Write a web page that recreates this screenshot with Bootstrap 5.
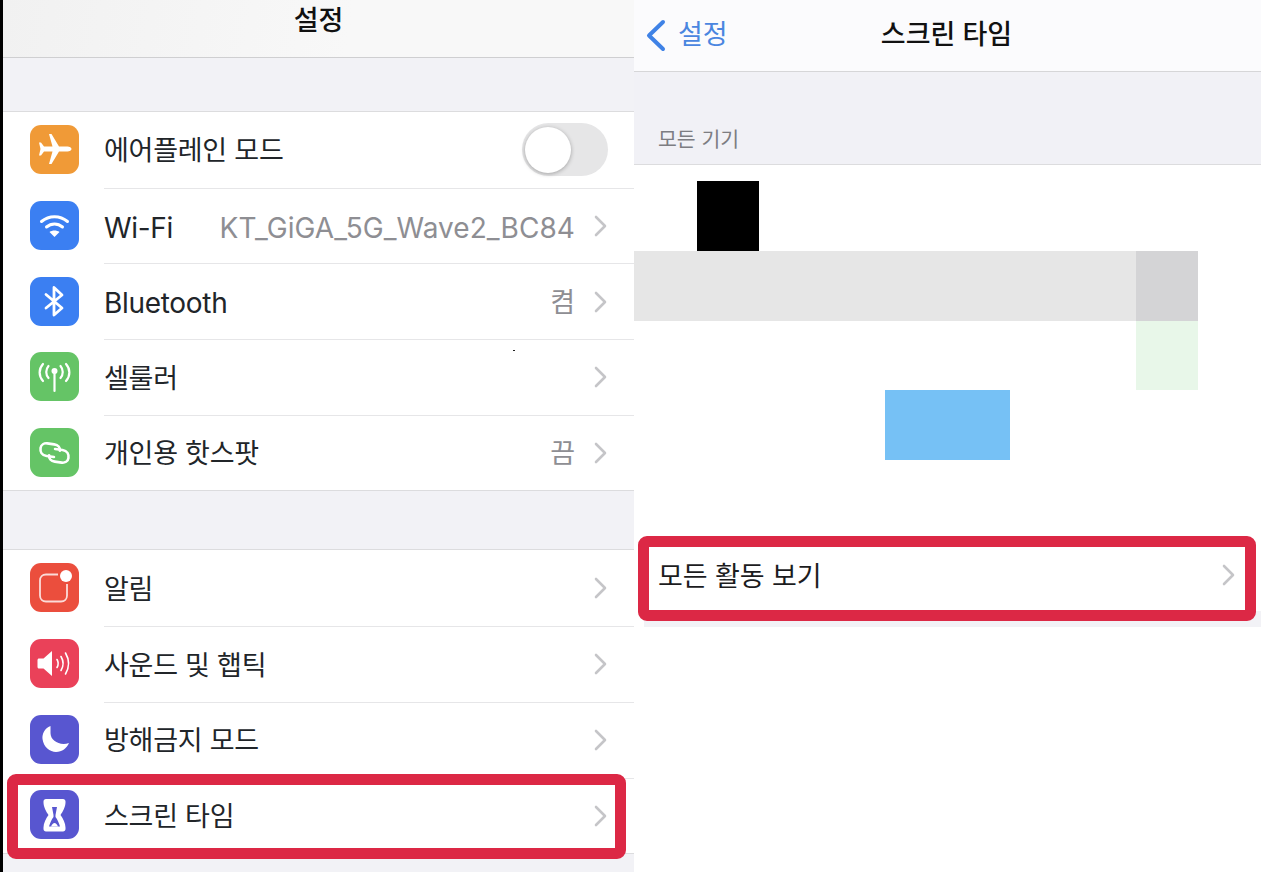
<!DOCTYPE html>
<html lang="ko">
<head>
    <meta charset="UTF-8">
    <meta name="viewport" content="width=device-width, initial-scale=1.0">
    <title>스크린 타임</title>
    <link href="https://cdn.jsdelivr.net/npm/bootstrap@5.3.0/dist/css/bootstrap.min.css" rel="stylesheet">
    <style>
        html, body { height: 872px; overflow: hidden; background: #fff; }
        body { font-family: Inter, "Noto Sans CJK KR", sans-serif; color: #1c1c1e; }
        .shot { width: 1261px; height: 872px; border-left: 3px solid #000; position: relative; background: #fff; }
        .pane-left { width: 631px; background: #f2f2f6; }
        .pane-right { width: 627px; background: #fff; position: relative; }

        .top-left { height: 58px; background: linear-gradient(100deg, #f1f1f1, #f8f8f8 55%, #f8f8f8); border-bottom: 1px solid #cfcfd1; }
        .top-left h1 { font-size: 27px; font-weight: 500; margin: 0; line-height: 1; padding-top: 7px; color: #111; }
        .top-right { height: 72px; background: #fbfbfd; border-bottom: 1px solid #d6d6d8; position: relative; }
        .top-right h2 { font-size: 27px; font-weight: 500; margin: 0 2px 0 0; color: #111; }
        .back-link { position: absolute; left: 11px; top: 0; height: 70px; color: #4a86e0; font-size: 27px; gap: 12px; }

        .set-list { border-top: 1px solid #dcdcde; border-bottom: 1px solid #dcdcde; border-radius: 0; background: #fff; }
        .list-gap-a { margin-top: 53px; }
        .list-gap-b { margin-top: 58px; }
        .list-gap-b .set-icon { margin-top: -1px; }
        .set-row { height: 75.7px; padding: 0; border: 0; background: #fff; }
        .set-icon { width: 49px; height: 49px; border-radius: 11px; margin: 0 25px 0 27px; flex: none; }
        .set-icon svg { width: 49px; height: 49px; display: block; }
        .set-body { height: 100%; padding-right: 27px; font-size: 27px; letter-spacing: -.25px; }
        .set-body > span { padding-top: 3px; }
        .set-row + .set-row .set-body { border-top: 1px solid #e6e6e8; }
        .set-val { color: #8e8e93; margin-right: 19px; letter-spacing: 0; }
        .latin-txt { font-size: 28px; letter-spacing: -.3px; }
        .latin-val { font-size: 28px; letter-spacing: .05px; }
        .chev { width: 13px; height: 22px; flex: none; }

        .bg-orange { background: #f09a37; }
        .bg-wifi { background: #3b7ff2; }
        .bg-green { background: #65c466; }
        .bg-notif { background: #eb4e3d; }
        .bg-sound { background: #ea4159; }
        .bg-indigo { background: #5856d0; }

        .toggle-off { width: 86px; height: 53px; border-radius: 27px; background: #e6e6e7; position: relative; margin-right: -1px; }
        .toggle-knob { position: absolute; left: 3px; top: 3.5px; width: 46px; height: 46px; border-radius: 50%; background: #fff; box-shadow: 0 1px 4px rgba(0,0,0,.3); }

        .group-label { height: 93px; background: #f1f1f6; border-bottom: 1px solid #dcdcde; padding: 0 0 8px 24px; font-size: 20.5px; color: #7d7d82; }

        .blocks { margin-top: 16px; display: grid; grid-template-columns: 63px 62px 126px 125px 126px 62px 63px; grid-template-rows: 70px 70px 69px 70px; }
        .blk-black { grid-column: 2; grid-row: 1; background: #000; }
        .blk-grey { grid-column: 1 / 7; grid-row: 2; background: #e6e6e6; }
        .blk-dark { grid-column: 6; grid-row: 2; background: #d4d4d6; }
        .blk-green { grid-column: 6; grid-row: 3; background: #e8f7e9; }
        .blk-blue { grid-column: 4; grid-row: 4; background: #76c1f5; }

        .all-row { margin-top: 80px; height: 71px; padding: 0 26px 0 24px; font-size: 27px; background: #fff; }
        .all-row span { padding-top: 3px; letter-spacing: -.1px; }
        .all-row .chev { margin-top: -2px; }
        .row-strip { height: 16px; margin-left: 10px; background: #f2f2f6; }

        .red-box { position: absolute; border: 11px solid #dc2845; border-radius: 9px; pointer-events: none; }
        .red-a { left: 4px; top: 774px; width: 619px; height: 85px; }
        .red-b { left: 4px; top: 536px; width: 618px; height: 85px; }
        .speck { position: absolute; left: 510px; top: 350px; width: 2px; height: 1px; background: #222; }
    </style>
</head>
<body>
<div class="shot d-flex">

    <!-- 왼쪽: 설정 -->
    <div class="pane-left">
        <div class="top-left text-center"><h1>설정</h1></div>

        <ul class="list-group set-list list-gap-a">
            <li class="list-group-item set-row d-flex align-items-center">
                <span class="set-icon bg-orange"><svg viewBox="0 0 49 49"><path fill="#fff" d="M41.500 24c0-1.500-2-2.500-4-2.500H29L21.500 9H19l3.500 12.500H14l-3-4H9l1.500 6.500L9 30.500h2l3-4h8.500L19 39h2.500L29 26.500h8.500c2 0 4-1 4-2.500z"/></svg></span>
                <div class="set-body flex-grow-1 d-flex align-items-center justify-content-between">
                    <span>에어플레인 모드</span>
                    <div class="toggle-off"><div class="toggle-knob"></div></div>
                </div>
            </li>
            <li class="list-group-item set-row d-flex align-items-center">
                <span class="set-icon bg-wifi"><svg viewBox="0 0 49 49"><g fill="none" stroke="#fff" stroke-width="3" stroke-linecap="round"><path d="M11.500 20.500c7.500-6.500 18.500-6.500 26 0"/><path d="M16.500 26c4.800-4 11.200-4 16 0"/></g><path fill="#fff" d="M24.500 36l-5-5c2.800-2 7.200-2 10 0z"/></svg></span>
                <div class="set-body flex-grow-1 d-flex align-items-center">
                    <span class="me-auto latin-txt">Wi-Fi</span>
                    <span class="set-val latin-val">KT_GiGA_5G_Wave2_BC84</span>
                    <svg class="chev" viewBox="0 0 13 22"><path d="M2 2l9 9-9 9" fill="none" stroke="#c5c5c8" stroke-width="2.600" stroke-linecap="round" stroke-linejoin="round"/></svg>
                </div>
            </li>
            <li class="list-group-item set-row d-flex align-items-center">
                <span class="set-icon bg-wifi"><svg viewBox="0 0 49 49"><path d="M16 17.500L32 31l-8 7V10.500l8 7.500L16 31" fill="none" stroke="#fff" stroke-width="2.800" stroke-linejoin="round" stroke-linecap="round"/></svg></span>
                <div class="set-body flex-grow-1 d-flex align-items-center">
                    <span class="me-auto latin-txt">Bluetooth</span>
                    <span class="set-val">켬</span>
                    <svg class="chev" viewBox="0 0 13 22"><path d="M2 2l9 9-9 9" fill="none" stroke="#c5c5c8" stroke-width="2.600" stroke-linecap="round" stroke-linejoin="round"/></svg>
                </div>
            </li>
            <li class="list-group-item set-row d-flex align-items-center">
                <span class="set-icon bg-green"><svg viewBox="0 0 49 49"><g fill="none" stroke="#fff" stroke-width="2.200" stroke-linecap="round"><path d="M24.500 20v19"/><path d="M18.500 14c-3 3.500-3 8.500 0 12"/><path d="M30.500 14c3 3.500 3 8.500 0 12"/><path d="M13 12c-4.500 5-4.500 12 0 17"/><path d="M36 12c4.500 5 4.500 12 0 17"/></g><circle cx="24.500" cy="19" r="3" fill="#fff"/></svg></span>
                <div class="set-body flex-grow-1 d-flex align-items-center">
                    <span class="me-auto">셀룰러</span>
                    <svg class="chev" viewBox="0 0 13 22"><path d="M2 2l9 9-9 9" fill="none" stroke="#c5c5c8" stroke-width="2.600" stroke-linecap="round" stroke-linejoin="round"/></svg>
                </div>
            </li>
            <li class="list-group-item set-row d-flex align-items-center">
                <span class="set-icon bg-green"><svg viewBox="0 0 49 49"><g fill="none" stroke="#fff" stroke-width="2.600" stroke-linecap="round" transform="rotate(8 24.500 25)"><path d="M24.500 29H17c-5 0-7-3.500-7-7s3-5.500 6-5.500h7c4 0 6.500 2.500 6.500 5.500"/><path d="M24.500 21H32c5 0 7 3.500 7 7s-3 5.500-6 5.500h-7c-4 0-6.500-2.500-6.500-5.500"/></g></svg></span>
                <div class="set-body flex-grow-1 d-flex align-items-center">
                    <span class="me-auto">개인용 핫스팟</span>
                    <span class="set-val">끔</span>
                    <svg class="chev" viewBox="0 0 13 22"><path d="M2 2l9 9-9 9" fill="none" stroke="#c5c5c8" stroke-width="2.600" stroke-linecap="round" stroke-linejoin="round"/></svg>
                </div>
            </li>
        </ul>

        <ul class="list-group set-list list-gap-b">
            <li class="list-group-item set-row d-flex align-items-center">
                <span class="set-icon bg-notif"><svg viewBox="0 0 49 49"><path d="M28 11.500H16c-3.500 0-6 2.500-6 6v15c0 3.500 2.500 6 6 6h15c3.500 0 6-2.500 6-6V21" fill="none" stroke="#fff" stroke-opacity=".8" stroke-width="1.800"/><circle cx="36" cy="13" r="6" fill="#fff"/></svg></span>
                <div class="set-body flex-grow-1 d-flex align-items-center">
                    <span class="me-auto">알림</span>
                    <svg class="chev" viewBox="0 0 13 22"><path d="M2 2l9 9-9 9" fill="none" stroke="#c5c5c8" stroke-width="2.600" stroke-linecap="round" stroke-linejoin="round"/></svg>
                </div>
            </li>
            <li class="list-group-item set-row d-flex align-items-center">
                <span class="set-icon bg-sound"><svg viewBox="0 0 49 49"><path fill="#fff" d="M9 19.500h4.500l8.500-7.500v25l-8.500-7.500H9c-.8 0-1.500-.7-1.500-1.500v-7c0-.8.7-1.500 1.500-1.500z"/><g fill="none" stroke="#fff" stroke-width="1.600" stroke-linecap="round"><path d="M27 20.500c1.500 2.500 1.500 5.500 0 8"/><path d="M31 17.500c2.700 4.500 2.700 9.500 0 14"/><path d="M35.500 14c3.800 6.500 3.800 14.500 0 21"/></g></svg></span>
                <div class="set-body flex-grow-1 d-flex align-items-center">
                    <span class="me-auto">사운드 및 햅틱</span>
                    <svg class="chev" viewBox="0 0 13 22"><path d="M2 2l9 9-9 9" fill="none" stroke="#c5c5c8" stroke-width="2.600" stroke-linecap="round" stroke-linejoin="round"/></svg>
                </div>
            </li>
            <li class="list-group-item set-row d-flex align-items-center">
                <span class="set-icon bg-indigo"><svg viewBox="0 0 49 49"><path fill="#fff" d="M20.500 11c-6 2-8.500 8-8 13 1 8 7.500 13 13.500 13s11-4 13-9c-9 3-18.500-2-18.500-10 0-2.500 0-5 0-7z"/></svg></span>
                <div class="set-body flex-grow-1 d-flex align-items-center">
                    <span class="me-auto">방해금지 모드</span>
                    <svg class="chev" viewBox="0 0 13 22"><path d="M2 2l9 9-9 9" fill="none" stroke="#c5c5c8" stroke-width="2.600" stroke-linecap="round" stroke-linejoin="round"/></svg>
                </div>
            </li>
            <li class="list-group-item set-row d-flex align-items-center">
                <span class="set-icon bg-indigo"><svg viewBox="0 0 49 49"><path fill="#fff" d="M16 9h17c1.500 0 2.500 1 2.500 2.500v1c0 4-2.500 9-5 12.500 2.500 3.500 5 8 5 12.500v1.500c0 1.500-1 2.500-2.500 2.500H16c-1.500 0-2.500-1-2.500-2.500v-1.500c0-4.500 2.500-9 5-12.500-2.500-3.500-5-8.500-5-12.500v-1C13.500 10 14.500 9 16 9z"/><path fill="#5856d0" d="M22 17h5l-1.500 8v2c2 2.500 3.500 6 4.500 9.500H19c1-3.500 2.500-7 4.500-9.500v-2z"/><path fill="#fff" d="M21 36.500c1-2 2.200-3.500 3.500-3.500s2.500 1.500 3.500 3.500z"/></svg></span>
                <div class="set-body flex-grow-1 d-flex align-items-center">
                    <span class="me-auto">스크린 타임</span>
                    <svg class="chev" viewBox="0 0 13 22"><path d="M2 2l9 9-9 9" fill="none" stroke="#c5c5c8" stroke-width="2.600" stroke-linecap="round" stroke-linejoin="round"/></svg>
                </div>
            </li>
        </ul>
    </div>

    <!-- 오른쪽: 스크린 타임 -->
    <div class="pane-right">
        <div class="top-right d-flex align-items-center justify-content-center">
            <div class="back-link d-flex align-items-center">
                <svg width="21" height="33" viewBox="0 0 21 33"><path d="M18 3L4 16.500 18 30" fill="none" stroke="#3f82e6" stroke-width="4" stroke-linecap="round" stroke-linejoin="round"/></svg>
                <span>설정</span>
            </div>
            <h2>스크린 타임</h2>
        </div>
        <div class="group-label d-flex align-items-end">모든 기기</div>

        <div class="blocks">
            <div class="blk-black"></div>
            <div class="blk-grey"></div>
            <div class="blk-dark"></div>
            <div class="blk-green"></div>
            <div class="blk-blue"></div>
        </div>

        <div class="all-row d-flex align-items-center justify-content-between">
            <span>모든 활동 보기</span>
            <svg class="chev" viewBox="0 0 13 22"><path d="M2 2l9 9-9 9" fill="none" stroke="#c5c5c8" stroke-width="2.600" stroke-linecap="round" stroke-linejoin="round"/></svg>
        </div>
        <div class="row-strip"></div>

        <div class="red-box red-b"></div>
    </div>

    <div class="red-box red-a"></div>
    <div class="speck"></div>
</div>

<script src="https://cdn.jsdelivr.net/npm/bootstrap@5.3.0/dist/js/bootstrap.bundle.min.js"></script>
</body>
</html>
